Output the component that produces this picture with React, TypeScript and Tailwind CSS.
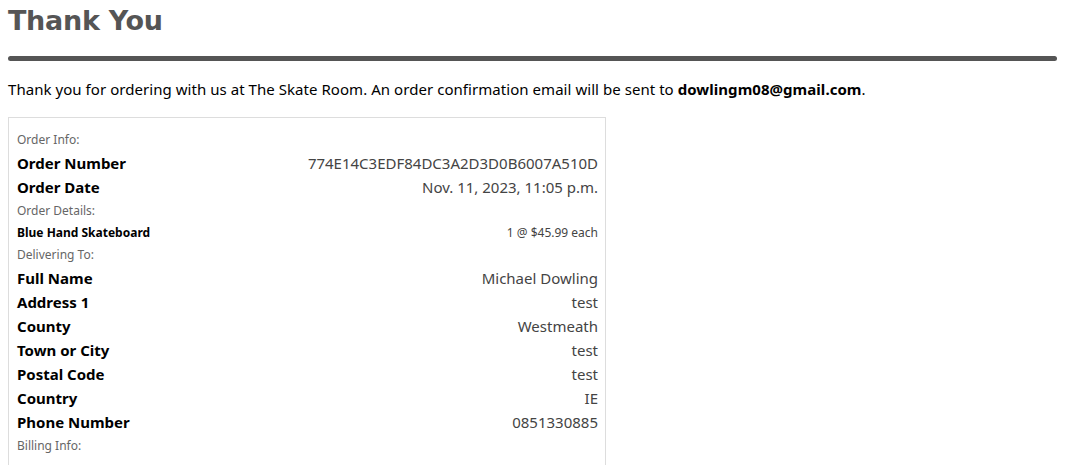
type Row = { label: string; value: string };

const orderInfo: Row[] = [
  { label: 'Order Number', value: '774E14C3EDF84DC3A2D3D0B6007A510D' },
  { label: 'Order Date', value: 'Nov. 11, 2023, 11:05 p.m.' },
];

const delivery: Row[] = [
  { label: 'Full Name', value: 'Michael Dowling' },
  { label: 'Address 1', value: 'test' },
  { label: 'County', value: 'Westmeath' },
  { label: 'Town or City', value: 'test' },
  { label: 'Postal Code', value: 'test' },
  { label: 'Country', value: 'IE' },
  { label: 'Phone Number', value: '0851330885' },
];

function SectionLabel({ text }: { text: string }) {
  return <div className="h-[23px] flex items-center text-[12px] text-[#666]">{text}</div>;
}

function InfoRow({ label, value }: Row) {
  return (
    <div className="h-[24px] flex items-center justify-between">
      <span className="text-[15px] font-bold text-black">{label}</span>
      <span className="text-[15px] text-[#444]">{value}</span>
    </div>
  );
}

export default function App() {
  return (
    <div className="px-2 bg-white h-[465px] overflow-hidden font-['Noto_Sans',sans-serif] text-black">
      <h1 className="pt-[2px] text-[27px] leading-[38px] font-bold text-[#555] font-['DejaVu_Sans',sans-serif] tracking-[-0.3px]">
        Thank You
      </h1>
      <div className="mt-[16px] h-[5px] rounded-full bg-[#555] mr-[11px]"></div>
      <p className="mt-[18px] text-[15px] leading-[20px] tracking-[0.05px]">
        Thank you for ordering with us at The Skate Room. An order confirmation email will be sent to{' '}
        <strong>dowlingm08@gmail.com</strong>.
      </p>
      <div className="mt-[18px] w-[598px] border border-[#ddd] border-b-0 pl-[8px] pr-[7px] pt-[10px] h-[348px]">
        <SectionLabel text="Order Info:" />
        {orderInfo.map((r) => (
          <InfoRow key={r.label} {...r} />
        ))}
        <SectionLabel text="Order Details:" />
        <div className="h-[21px] flex items-center justify-between">
          <span className="text-[12px] font-bold">Blue Hand Skateboard</span>
          <span className="text-[12px] text-[#444]">1 @ $45.99 each</span>
        </div>
        <SectionLabel text="Delivering To:" />
        {delivery.map((r) => (
          <InfoRow key={r.label} {...r} />
        ))}
        <SectionLabel text="Billing Info:" />
      </div>
    </div>
  );
}
